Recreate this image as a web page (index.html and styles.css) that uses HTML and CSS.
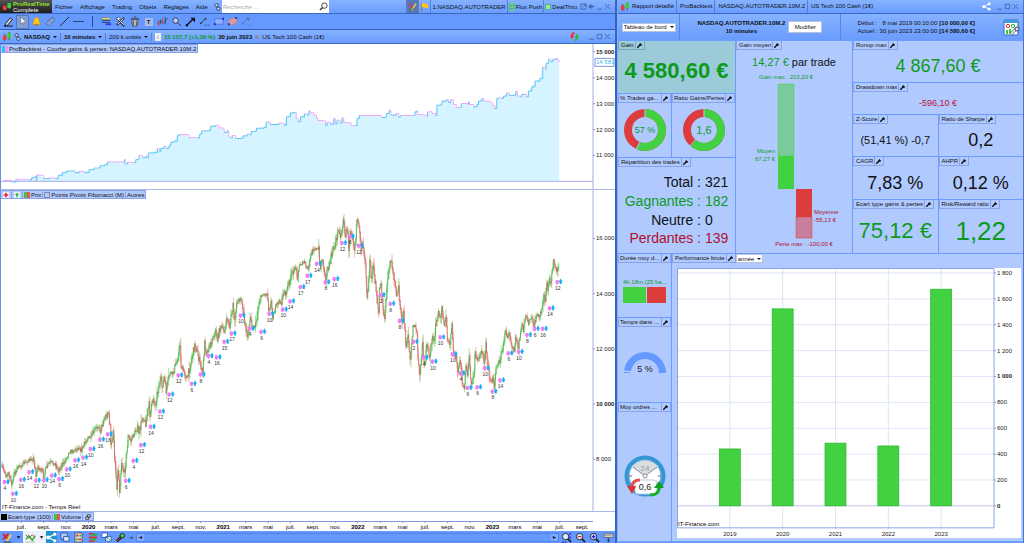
FILE: index.html
```html
<!DOCTYPE html>
<html lang="fr">
<head>
    <meta charset="UTF-8">
    <meta name="viewport" content="width=device-width, initial-scale=1.0">
    <title>ProRealTime - NASDAQ</title>
    <link rel="stylesheet" href="styles.css">
</head>
<body>
    <svg class="defs" aria-hidden="true">
        <symbol id="i-candles" viewBox="0 0 10 10">
            <path d="M3 2v8M8 0v9" stroke="#444" stroke-width="1"/>
            <rect x="1" y="4" width="4" height="5" rx="1" fill="#ee3b3b"/>
            <rect x="6" y="1" width="4" height="6" rx="1" fill="#35d035"/>
        </symbol>
        <symbol id="i-link" viewBox="0 0 8 10">
            <g fill="none" stroke="#3f4b66" stroke-width="1"><rect x="1" y="1" width="4" height="4" rx="2"/><rect x="3" y="5" width="4" height="4" rx="2"/><path d="M3 3l2 4"/></g>
            <path d="M2 3h2M4 7h2" stroke="#fff"/>
        </symbol>
        <symbol id="i-wrench" viewBox="0 0 8 8">
            <path d="M1 7l3-3" stroke="#111" stroke-width="2" stroke-linecap="round"/>
            <path d="M3 2.500L5 1v2l2 0l-1 2l-3 0z" fill="#111"/>
        </symbol>
        <symbol id="i-min" viewBox="0 0 8 8"><path d="M1 7h6" stroke="#4068a8" fill="none"/></symbol>
        <symbol id="i-max" viewBox="0 0 8 8"><path d="M1.500 1.500h5v5h-5z" stroke="#4068a8" fill="none"/></symbol>
        <symbol id="i-close" viewBox="0 0 8 8"><path d="M1 1l6 6M7 1l-6 6" stroke="#4068a8" fill="none"/></symbol>
        <symbol id="i-share" viewBox="0 0 10 10">
            <path d="M8 2L2 5l6 3" stroke="#fff" fill="none"/>
            <g fill="#fff"><circle cx="8" cy="2" r="1.500"/><circle cx="2" cy="5" r="1.800"/><circle cx="8" cy="8" r="1.500"/></g>
        </symbol>
        <symbol id="i-zoom" viewBox="0 0 12 12">
            <path d="M7 7l4 4" stroke="#222" stroke-width="2"/><circle cx="5" cy="5" r="3.500" fill="#dfe9ff" stroke="#222"/>
        </symbol>
    </svg>

    <div class="app">
        <main class="workspace">
            <header class="titlebar">
                <div class="logo">
                    <svg><use href="#i-candles"/></svg>
                    <div><b>ProRealTime</b><span>Complete</span></div>
                </div>
                <nav class="menu">
                    <a href="#">Fichier</a>
                    <a href="#">Affichage</a>
                    <a href="#">Trading</a>
                    <a href="#">Objets</a>
                    <a href="#">Réglages</a>
                    <a href="#">Aide</a>
                </nav>
                <svg class="link"><use href="#i-link"/></svg>
                <div class="search">
                    <input type="text" placeholder="Recherche ..." aria-label="Recherche">
                    <svg viewBox="0 0 10 10"><circle cx="6" cy="4" r="3" fill="#fff" stroke="#333"/><path d="M4 6L1 9" stroke="#333" stroke-width="1.500"/></svg>
                </div>
                <div class="tabs">
                    <button class="sq on" aria-label="Crayons"><svg viewBox="0 0 10 10"><path d="M1 1l5 7" stroke="#e33" stroke-width="1.500"/><path d="M9 1L4 9" stroke="#fc3" stroke-width="1.500"/><path d="M1 6l3 3 3-3" stroke="#2a8a3a" fill="none"/></svg></button>
                    <button class="sq" aria-label="Drapeau"><svg viewBox="0 0 10 10"><path d="M2 1v9" stroke="#a60"/><path d="M2 1q3-1 4 1h3v4H6Q4 4 2 6z" fill="#ffc61a"/></svg></button>
                    <button>1.NASDAQ.AUTOTRADER</button>
                    <button><svg viewBox="0 0 6 8"><path d="M0 0h6v2H0zM0 3h6v2H0zM0 6h6v2H0z" fill="#7fe07f" stroke="#396" stroke-width=".5"/></svg>Flux Push</button>
                    <button><i class="dot"></i>DealThru</button>
                </div>
                <div class="win">
                    <svg viewBox="0 0 8 8"><path d="M1 1h6v6H1zM3 5l3-3M4 2h2v2" stroke="#4068a8" fill="none"/></svg>
                    <svg viewBox="0 0 8 8"><path d="M1 4h6" stroke="#4068a8" stroke-width="2"/><path d="M4 1v6L0 4z" fill="#4068a8"/></svg>
                    <svg><use href="#i-min"/></svg>
                    <svg><use href="#i-close"/></svg>
                </div>
            </header>

            <div class="toolbar">
                <button aria-label="Crayon"><svg viewBox="0 0 12 12"><path d="M3 8l5-6 2 2-5 6-3 1z" fill="#ddd" stroke="#111"/><path d="M1 11h10" stroke="#111"/></svg></button>
                <button class="on" aria-label="Curseur"><svg viewBox="0 0 12 12"><path d="M4 1v8l2-2 2 4 1-1-2-3h3z" fill="#fff" stroke="#666" stroke-width=".7"/></svg></button>
                <button aria-label="Alerte"><svg viewBox="0 0 12 12"><path d="M1 9q2-1 2-4t3-4q3 1 3 4t2 4z" fill="#ffc526" stroke="#b8860b" stroke-width=".6"/><circle cx="6" cy="10" r="1.200" fill="#c60"/></svg></button>
                <button aria-label="Règle"><svg viewBox="0 0 12 12"><path d="M1 8l7-7 3 3-7 7z" fill="#8aa6dd" stroke="#4d6596"/><path d="M4 6l1 1M6 4l1 1M8 2l1 1" stroke="#4d6596"/></svg></button>
                <button aria-label="Droite"><svg viewBox="0 0 12 12"><path d="M1 11L11 1" stroke="#222"/></svg></button>
                <button aria-label="Horizontale"><svg viewBox="0 0 12 12"><path d="M0 6h12" stroke="#29406f"/></svg></button>
                <button aria-label="Verticale"><svg viewBox="0 0 12 12"><path d="M6 0v12" stroke="#29406f"/></svg></button>
                <button aria-label="Calques"><svg viewBox="0 0 12 12"><path d="M1 2h9v2H1z" fill="#f4e36a" stroke="#666" stroke-width=".5"/><path d="M1 5h9M1 7h9" stroke="#29406f"/><path d="M5 9h6" stroke="#33d" stroke-width="2"/></svg></button>
                <button aria-label="Outils"><svg viewBox="0 0 12 12"><path d="M2 2l8 9M10 2l-8 8" stroke="#222" stroke-width="2"/><path d="M3 3l7 7M9 3l-6 6" stroke="#eee"/><path d="M1 3l3-2 2 2-2 2z" fill="#eee" stroke="#222" stroke-width=".6"/></svg></button>
                <button aria-label="Corbeille"><svg viewBox="0 0 12 12"><path d="M3 4h7l-1 7H4z" fill="#ccc" stroke="#333" stroke-width=".8"/><path d="M2 3h9M5 1h3M5 5v5M8 5v5" stroke="#333" stroke-width=".8"/></svg></button>
                <button aria-label="Texte"><b class="txt">T</b></button>
                <button aria-label="Indicateur"><svg viewBox="0 0 12 12"><path d="M0 9l4-4 3 3 5-6" stroke="#274" fill="none"/><path d="M2 5v6M6 2v7" stroke="#e33"/><path d="M4 4v5M9 1v8" stroke="#243f77"/></svg></button>
                <button aria-label="Loupe"><svg viewBox="0 0 12 12"><circle cx="5" cy="5" r="3" fill="#bcd0ff" stroke="#333"/><path d="M7 7l4 4" stroke="#333"/></svg></button>
                <button aria-label="Flèche"><svg viewBox="0 0 12 12"><path d="M2 10l7-7" stroke="#111" stroke-width="1.500"/><path d="M6 2h5v5z" fill="#111"/><circle cx="2" cy="10" r="1.300" fill="#111"/></svg></button>
                <button aria-label="Segment"><svg viewBox="0 0 12 12"><path d="M2 8l5-5" stroke="#333"/><circle cx="2" cy="8" r="1" fill="#333"/><circle cx="7" cy="3" r="1" fill="#333"/><path d="M6 10h5" stroke="#333" stroke-dasharray="1 1"/></svg></button>
                <button aria-label="Rectangle"><svg viewBox="0 0 12 12"><path d="M2 3h9v6H2z" fill="#8fb0ff" stroke="#4262c8" stroke-width=".7"/><path d="M1 9h2M10 3h2" stroke="#22c" stroke-width="2"/></svg></button>
                <button aria-label="Ellipse"><svg viewBox="0 0 12 12"><ellipse cx="6" cy="6" rx="5" ry="3" transform="rotate(-20 6 6)" fill="#c9a0b8" stroke="#d9825a"/><path d="M1 9h2M9 2h2" stroke="#22c" stroke-width="2"/></svg></button>
                <button aria-label="Autres formes"><svg viewBox="0 0 12 12"><path d="M2 8l6-6" stroke="#5874ac"/><circle cx="2" cy="8" r="1" fill="#5874ac"/><path d="M5 2h4v4z" fill="#5874ac"/><path d="M6 10h5" stroke="#5874ac" stroke-dasharray="1 1"/></svg></button>
            </div>

            <div class="instrument">
                <svg class="candles"><use href="#i-candles"/></svg>
                <svg class="link"><use href="#i-link"/></svg>
                <label class="drop"><select class="bold" aria-label="Instrument"><option>NASDAQ</option></select></label>
                <label class="drop"><select class="bold" aria-label="Unité de temps"><option>10 minutes</option></select></label>
                <label class="drop"><select aria-label="Historique"><option>200 k unités</option></select></label>
                <span class="info">i</span>
                <b class="green">15 157,7 (+1,39 %)</b>
                <b>30 juin 2023</b>
                <i class="bullet"></i>
                <span>US Tech 100 Cash (1€)</span>
                <svg class="sync" viewBox="0 0 10 10"><path d="M5 1Q2 1 2 5" stroke="#e33" stroke-width="2" fill="none"/><path d="M0 4h5L2 8z" fill="#e33"/><path d="M5 9q3 0 3-4" stroke="#2b3" stroke-width="2" fill="none"/><path d="M5 6h5L8 2z" fill="#2b3"/></svg>
                <div class="win">
                    <svg><use href="#i-min"/></svg>
                    <svg><use href="#i-max"/></svg>
                    <svg><use href="#i-close"/></svg>
                </div>
            </div>

            <section class="chart equity">
                <div class="legend"><span><i class="sw equity-sw"></i>ProBacktest - Courbe gains &amp; pertes: NASDAQ.AUTOTRADER.10M.2</span></div>
                <svg id="equity"></svg>
            </section>
            <section class="chart price">
                <div class="legend">
                    <span><svg viewBox="0 0 8 8"><path d="M0 0h8v8H0z" fill="#eef"/><path d="M1 4h6M4 1v6" stroke="#e22" stroke-width="2"/></svg></span>
                    <span><svg viewBox="0 0 8 8"><path d="M0 0h8v8H0z" fill="#eef"/><path d="M4 1l3 3H5v3H3V4H1z" fill="#2b3"/></svg></span>
                    <span><i class="sw price-sw"></i>Prix</span>
                    <span><i class="sw empty-sw"></i>Points Pivots Fibonacci (M)</span>
                    <span>Autres</span>
                </div>
                <svg id="price"></svg>
                <div class="source">IT-Finance.com - Temps Réel</div>
            </section>
            <section class="volume">
                <span><i class="sw black-sw"></i>Ecart-type (100)</span>
                <span><i class="sw price-sw"></i>Volume</span>
                <span><svg viewBox="0 0 8 8"><path d="M3 1h4v3H3zM1 4h4v3H1z" fill="#fff" stroke="#111"/></svg></span>
            </section>
            <svg id="time"></svg>

            <footer class="bottombar">
                <button aria-label="Trading"><svg viewBox="0 0 12 12"><path d="M1 2l6 6M7 2L1 8" stroke="#d22" stroke-width="2"/><path d="M5 10l5-7" stroke="#fc3" stroke-width="2"/><path d="M2 11h8" stroke="#333"/></svg></button>
                <button class="arrow">▾</button>
                <button class="white" aria-label="Style"><svg viewBox="0 0 12 12"><path d="M1 3l3 4 4-4 3 3" stroke="#d33" fill="none"/><path d="M1 8l3-4 4 5 3-5" stroke="#2a3" stroke-width="1.500" fill="none"/><path d="M1 11h10" stroke="#9c9"/></svg></button>
                <button class="arrow white">▾</button>
                <button class="teal" aria-label="Partager"><svg><use href="#i-share"/></svg></button>
                <button aria-label="Messages"><svg viewBox="0 0 12 12"><path d="M2 1h7v6H5L3 9V7H2z" fill="#b4ccff" stroke="#35589c"/><path d="M5 5h6v5H5z" fill="#dce7ff" stroke="#35589c"/></svg></button>
                <button aria-label="Notes"><svg viewBox="0 0 12 12"><path d="M2 1h8v10H2z" fill="#ddd" stroke="#555"/><path d="M3 4h3M6 8h3" stroke="#d33" stroke-width="2"/><path d="M7 4h2M3 8h2" stroke="#2a3" stroke-width="2"/></svg></button>
                <button aria-label="Carnet"><svg viewBox="0 0 12 12"><path d="M2 2h6M2 6h9M2 10h6" stroke="#d33" stroke-width="2"/><path d="M5 3h6M4 8h6" stroke="#2b3" stroke-width="2"/></svg></button>
                <button aria-label="Fenêtres"><svg viewBox="0 0 12 12"><path d="M1 1h6v5H1zM5 5h6v5H5z" fill="#fff" stroke="#2e5cb0"/><path d="M6 8l2-1 2 2" stroke="#2a3" fill="none"/></svg></button>
                <button aria-label="Réglages"><svg viewBox="0 0 12 12"><path d="M2 10l6-6" stroke="#222" stroke-width="3"/><path d="M2 10l5-5" stroke="#e44"/><circle cx="8" cy="4" r="2.500" fill="#4c5" stroke="#222"/></svg></button>
                <button class="arrow">«</button>
                <div class="scroll"><button aria-label="Gauche">◂</button><button aria-label="Droite">▸</button></div>
                <button aria-label="Zoom"><svg viewBox="0 0 12 12"><use href="#i-zoom"/><path d="M10 1v3M10 5v2M1 11h5" stroke="#22d" stroke-width="1.500" stroke-dasharray="2 1"/></svg></button>
                <button aria-label="Zoom arrière"><svg viewBox="0 0 12 12"><use href="#i-zoom"/><path d="M3 5h4" stroke="#c33" stroke-width="1.500"/></svg></button>
                <button aria-label="Zoom avant"><svg viewBox="0 0 12 12"><use href="#i-zoom"/><path d="M3 5h4M5 3v4" stroke="#22d" stroke-width="1.500"/></svg></button>
                <button aria-label="Clavier"><svg viewBox="0 0 12 12"><path d="M1 2h10v4H1z" fill="#ddd" stroke="#666"/><path d="M2 4h8" stroke="#555" stroke-dasharray="1 1"/><path d="M6 7v4" stroke="#246" stroke-width="2"/></svg></button>
            </footer>
        </main>

        <aside class="report">
            <header class="titlebar">
                <svg class="candles"><use href="#i-candles"/></svg>
                <div class="crumbs">
                    <span>Rapport détaillé</span>
                    <span>ProBacktest</span>
                    <span>NASDAQ.AUTOTRADER.10M.2</span>
                    <span>US Tech 100 Cash (1€)</span>
                </div>
                <svg class="candles push"><use href="#i-share"/></svg>
                <div class="win">
                    <svg><use href="#i-min"/></svg>
                    <svg><use href="#i-max"/></svg>
                    <svg><use href="#i-close"/></svg>
                </div>
            </header>
            <div class="summary">
                <div class="view"><label class="drop box"><select aria-label="Vue"><option>Tableau de bord</option></select></label></div>
                <div class="system">
                    <b>NASDAQ.AUTOTRADER.10M.2<br>10 minutes</b>
                    <button>Modifier</button>
                </div>
                <div class="dates">
                    <dl>
                        <dt>Début :</dt><dd>8 mai 2019 00:10:00</dd><dd><b>[10 000,00 €]</b></dd>
                        <dt>Actuel :</dt><dd>30 juin 2023 23:00:00</dd><dd><b>[14 580,60 €]</b></dd>
                    </dl>
                    <svg viewBox="0 0 17 17"><rect x="1" y="1" width="14" height="15" rx="1" fill="#fff" stroke="#2c6bb5"/><path d="M1 1h14v3H1z" fill="#3f9adf"/><circle cx="5" cy="7" r="1.700" fill="none" stroke="#e33"/><circle cx="10" cy="7" r="1.700" fill="none" stroke="#2b3"/><path d="M3 11h2v4H3zM6 10h2v5H6z" fill="#3c3"/><path d="M8 15l5-5" stroke="#445" stroke-width="3"/><path d="M8 15l5-5" stroke="#dde4f0" stroke-width="2"/><circle cx="14" cy="10" r="2" fill="#dde4f0" stroke="#445"/></svg>
                </div>
            </div>

            <div class="top">
                <div class="col">
                    <div class="tile gain"><h2>Gain<svg><use href="#i-wrench"/></svg></h2><p class="f22 green bold">4 580,60 €</p></div>
                    <div class="pair donuts">
                        <div class="tile short"><h2>% Trades ga...<svg><use href="#i-wrench"/></svg></h2>
                            <svg class="donut" viewBox="0 0 44 44"><circle cx="22" cy="22" r="17" pathLength="100" stroke="#dd3c3c"/><circle cx="22" cy="22" r="17" pathLength="100" stroke="#41d141" stroke-dasharray="57 43"/><path d="M22 0v9M13 42l4-8" stroke="#b0caff"/><text x="22" y="25" font-size="9">57 %</text></svg>
                        </div>
                        <div class="tile short"><h2>Ratio Gains/Pertes<svg><use href="#i-wrench"/></svg></h2>
                            <svg class="donut" viewBox="0 0 44 44"><circle cx="22" cy="22" r="17" pathLength="100" stroke="#dd3c3c"/><circle cx="22" cy="22" r="17" pathLength="100" stroke="#41d141" stroke-dasharray="61 39"/><path d="M22 0v9M8 38l6-7" stroke="#b0caff"/><text x="22" y="26" font-size="11">1,6</text></svg>
                        </div>
                    </div>
                    <div class="tile trades"><h2>Répartition des trades<svg><use href="#i-wrench"/></svg></h2>
                        <table>
                            <tr><th>Total :</th><td>321</td></tr>
                            <tr class="win-row"><th>Gagnantes :</th><td>182</td></tr>
                            <tr><th>Neutre :</th><td>0</td></tr>
                            <tr class="loss-row"><th>Perdantes :</th><td>139</td></tr>
                        </table>
                    </div>
                </div>
                <div class="tile mean"><h2>Gain moyen<svg><use href="#i-wrench"/></svg></h2>
                    <p class="f11"><span class="green">14,27 €</span> par trade</p>
                    <svg viewBox="0 0 116 178">
                        <g class="up"><text x="50" y="4" text-anchor="middle">Gain max : 213,20 €</text><text x="39" y="78" text-anchor="end">Moyen</text><text x="39" y="86" text-anchor="end">67,27 €</text></g>
                        <rect x="42" y="9" width="16" height="72" fill="#7acb9c" stroke="#41d141" stroke-width=".5"/>
                        <rect x="42" y="81" width="16" height="33" fill="#41d141"/>
                        <rect x="60" y="114" width="16" height="28" fill="#dd3c3c"/>
                        <rect x="60" y="142" width="16" height="21" fill="#c87f9e" stroke="#dd3c3c" stroke-width=".5"/>
                        <g class="down"><text x="78" y="139">Moyenne</text><text x="78" y="147">-55,13 €</text><text x="68" y="171" text-anchor="middle">Perte max : -100,00 €</text></g>
                    </svg>
                </div>
                <div class="col stats">
                    <div class="tile r41"><h2>Runup max<svg><use href="#i-wrench"/></svg></h2><p class="f18 green">4 867,60 €</p></div>
                    <div class="tile r31"><h2>Drawdown max<svg><use href="#i-wrench"/></svg></h2><p class="f9 red">-596,10 €</p></div>
                    <div class="pair r41">
                        <div class="tile"><h2>Z-Score<svg><use href="#i-wrench"/></svg></h2><p class="f11">(51,41 %) -0,7</p></div>
                        <div class="tile"><h2>Ratio de Sharpe<svg><use href="#i-wrench"/></svg></h2><p class="f18">0,2</p></div>
                    </div>
                    <div class="pair r41">
                        <div class="tile"><h2>CAGR<svg><use href="#i-wrench"/></svg></h2><p class="f18">7,83 %</p></div>
                        <div class="tile"><h2>AHPR<svg><use href="#i-wrench"/></svg></h2><p class="f18">0,12 %</p></div>
                    </div>
                    <div class="pair r53">
                        <div class="tile"><h2>Ecart type gains &amp; pertes<svg><use href="#i-wrench"/></svg></h2><p class="f22 green">75,12 €</p></div>
                        <div class="tile"><h2>Risk/Reward ratio<svg><use href="#i-wrench"/></svg></h2><p class="f26 green">1,22</p></div>
                    </div>
                </div>
            </div>

            <div class="bottom">
                <div class="col side">
                    <div class="tile short duration"><h2>Durée moy d...<svg><use href="#i-wrench"/></svg></h2>
                        <div class="bars"><small>4h 18m (25 ba...</small><i></i><i></i></div>
                    </div>
                    <div class="tile short market"><h2>Temps dans ...<svg><use href="#i-wrench"/></svg></h2>
                        <svg class="gauge" viewBox="0 0 44 26"><path d="M4.500 22a17.500 17.500 0 0 1 35 0" fill="none" stroke="#6699ff" stroke-width="7"/><path d="M1 20l8 1" stroke="#cfe0ff"/><text x="22" y="21" font-size="9">5 %</text></svg>
                    </div>
                    <div class="tile short orders"><h2>Moy ordres ...<svg><use href="#i-wrench"/></svg></h2>
                        <svg class="clock" viewBox="0 0 44 44">
                            <circle cx="22" cy="22" r="18" fill="#fff" stroke="#3795d3" stroke-width="5"/>
                            <circle cx="22" cy="22" r="16" fill="none" stroke="#8fc5e8"/>
                            <path d="M22 21L8 13Q22 0 36 13z" fill="#d8dde2"/>
                            <path d="M10 13l12 9 12-9" fill="none" stroke="#889"/>
                            <path d="M6 22h3M35 22h3" stroke="#667"/><circle cx="22" cy="22" r="2" fill="#fff" stroke="#889"/>
                            <text x="22" y="17" font-size="8" class="grey">24</text>
                            <rect x="12" y="26" width="22" height="14" rx="3" fill="#fff" stroke="#bcd"/>
                            <path d="M17 26Q9 26 9 33" fill="none" stroke="#e85050" stroke-width="3"/><path d="M4 32h9l-4 8z" fill="#e03030"/>
                            <path d="M27 41q9 0 9-7" fill="none" stroke="#18b028" stroke-width="3"/><path d="M31 34h10l-5-7z" fill="#10a020"/>
                            <text x="22" y="36" font-size="9">0,6</text>
                        </svg>
                    </div>
                </div>
                <div class="tile perf">
                    <h2>Performance brute<svg><use href="#i-wrench"/></svg></h2>
                    <label class="drop box year"><select aria-label="Période"><option>année</option></select></label>
                    <svg id="perf"></svg>
                </div>
            </div>
        </aside>
    </div>
    <script src="charts.js"></script>
</body>
</html>
```
FILE: styles.css
```css
* {
    box-sizing: border-box;
}

html, body {
    height: 100%;
}

body {
    margin: 0;
    font: 6px/8px "Liberation Sans", Arial, sans-serif;
    color: #111;
    background-color: #6699ff;
}

.defs {
    position: absolute;
    width: 0;
    height: 0;
}

a {
    color: inherit;
    text-decoration: none;
}

button, select, input {
    font: inherit;
    color: inherit;
    margin: 0;
    padding: 0;
    border: 0;
    background: none;
}

svg {
    flex: none;
}

.green {
    color: #0d9a1c;
}

.red {
    color: #c01030;
}

.app {
    display: grid;
    grid-template-columns: 617fr 407fr;
    min-height: 100vh;
}

.workspace, .report {
    display: flex;
    flex-direction: column;
    min-width: 0;
}

.workspace {
    border-right: 2px solid #3564c0;
}

.titlebar, .instrument {
    display: flex;
    align-items: center;
    flex: none;
    height: 14px;
    background-image: linear-gradient(#86b2ff, #6a9cff);
    border-bottom: 1px solid #3a68bc;
    white-space: nowrap;
}

.logo {
    display: flex;
    align-items: center;
    gap: 2px;
    width: 52px;
    height: 13px;
    padding-left: 2px;
    color: #fff;
    line-height: 6px;
    background-image: linear-gradient(#555, #1c1c1c);
}

.logo svg, .candles {
    width: 9px;
    height: 9px;
}

.logo b, .logo span {
    display: block;
}

.logo b {
    color: #8fe02a;
}

.menu {
    display: flex;
    gap: 7px;
    padding: 0 6px 0 3px;
}

.link {
    width: 7px;
    height: 10px;
}

.search {
    display: flex;
    align-items: center;
    width: 107px;
    height: 13px;
    margin-left: 1px;
    padding: 0 1px;
    background-color: #fff;
}

.search input {
    flex: 1;
    min-width: 0;
    font-style: italic;
    outline: none;
}

.search input::placeholder {
    color: #aaa;
}

.search svg {
    width: 9px;
    height: 9px;
}

.tabs {
    display: flex;
    height: 13px;
    margin-left: auto;
}

.tabs button {
    display: flex;
    align-items: center;
    gap: 1px;
    padding: 0 1px;
    border-left: 1px solid #5580d0;
}

.tabs svg {
    width: 6px;
    height: 8px;
}

.tabs .sq svg {
    width: 9px;
    height: 10px;
}

.tabs .sq.on {
    background-color: #5577bb;
}

.dot {
    width: 6px;
    height: 6px;
    background-color: #8df08d;
    border: 1px solid #5a9;
}

.win {
    display: flex;
    gap: 1px;
    padding: 0 4px 0 2px;
}

.win svg {
    width: 7px;
    height: 7px;
}

.toolbar {
    display: flex;
    align-items: center;
    gap: 1px;
    flex: none;
    height: 16px;
    padding-left: 2px;
    border-bottom: 1px solid #2f5db0;
}

.toolbar button {
    display: flex;
    align-items: center;
    justify-content: center;
    width: 13px;
    height: 14px;
}

.toolbar svg {
    width: 11px;
    height: 11px;
}

.toolbar .on {
    background-color: #7f9fdc;
    border: 1px solid #5577b8;
}

.toolbar .txt {
    width: 8px;
    color: #223;
    background-color: #a9bde8;
}

.instrument {
    gap: 3px;
    padding-left: 2px;
}

.instrument .drop {
    padding-right: 3px;
    border-right: 1px solid #5580d0;
}

.drop {
    display: flex;
    align-items: center;
    gap: 2px;
}

.drop::after {
    content: "";
    border: 2px solid transparent;
    border-top-color: #111;
    border-bottom: 0;
}

.drop select {
    appearance: none;
    line-height: 8px;
}

.bold {
    font-weight: bold;
}

.drop.box {
    height: 9px;
    padding: 0 1px;
    background-color: #fff;
    border: 1px solid #b8c4dd;
}

.info {
    width: 6px;
    text-align: center;
    color: #777;
    background-color: #eee;
}

.bullet {
    width: 4px;
    height: 4px;
    border-radius: 50%;
    background-color: #8a8a9a;
}

.sync {
    width: 9px;
    height: 9px;
    margin: 0 4px 0 auto;
}

.chart {
    position: relative;
    min-height: 0;
    background-color: #fff;
    border-left: 1px solid #6f8fd6;
    border-bottom: 1px solid #a9b9e6;
}

.chart.equity {
    flex: 146 1 0;
}

.chart.price {
    flex: 322 1 0;
}

.chart > svg {
    display: block;
    position: absolute;
    width: 100%;
    height: 100%;
}

.legend, .source {
    position: absolute;
    z-index: 1;
    left: 0;
}

.legend {
    top: 0;
    display: flex;
}

.legend span, .volume span {
    display: flex;
    align-items: center;
    gap: 1px;
    height: 9px;
    padding: 0 1px;
    background-color: #b0caff;
    border: 1px solid #88a4e6;
    border-left: 0;
    white-space: nowrap;
}

.legend svg, .volume svg {
    width: 8px;
    height: 6px;
}

.source {
    bottom: 0;
    padding-left: 1px;
}

.sw {
    width: 6px;
    height: 6px;
}

.equity-sw {
    background-image: linear-gradient(90deg, #1ec8ff 50%, #ff8cf0 50%);
}

.price-sw {
    background-image: linear-gradient(90deg, #3fc24a 50%, #e25a5a 50%);
}

.empty-sw {
    border: 1px solid #88a;
}

.black-sw {
    background-color: #000;
}

.volume {
    display: flex;
    flex: none;
    height: 9px;
    background-color: #fff;
}

#time {
    display: block;
    width: 100%;
    height: 10px;
    background-color: #fff;
}

.bottombar {
    display: flex;
    align-items: center;
    flex: none;
    height: 12px;
}

.bottombar > button {
    display: flex;
    align-items: center;
    justify-content: center;
    width: 14px;
    height: 12px;
}

.bottombar > .arrow {
    width: 9px;
}

.bottombar svg {
    width: 11px;
    height: 11px;
}

.bottombar .white {
    background-color: #eef2fb;
}

.bottombar .teal {
    width: 11px;
    background-color: #2490cc;
}

.scroll {
    display: flex;
    justify-content: space-between;
    flex: 1;
    height: 9px;
    border: 1px solid #5283ea;
}

.scroll button {
    width: 7px;
    line-height: 7px;
    background-color: #82aaff;
}

/* report */

.report {
    background-color: #6b9cff;
    border-left: 1px solid #85aeff;
    border-right: 1px solid #4474d8;
}

.report .titlebar {
    padding-left: 2px;
}

.crumbs {
    display: flex;
}

.crumbs span {
    padding: 0 2px 0 3px;
    border-right: 1px solid #5580d0;
    line-height: 13px;
}

.crumbs span:last-child {
    border: 0;
}

.push {
    margin-left: auto;
}

.report .push {
    margin-right: 3px;
}

.summary {
    display: grid;
    grid-template-columns: 62fr 160fr 182fr;
    flex: none;
    height: 26px;
    margin-bottom: 1px;
    background-image: linear-gradient(#86b2ff, #6a9cff);
    white-space: nowrap;
}

.summary > div {
    display: flex;
    align-items: center;
    justify-content: center;
    border-right: 1px solid #5a86dd;
}

.summary > .dates {
    justify-content: flex-end;
    gap: 28px;
    padding-right: 3px;
    border: 0;
}

.system {
    gap: 3px;
    text-align: center;
}

.system button {
    width: 34px;
    height: 12px;
    background-color: #fff;
    border: 1px solid #b8c4dd;
    border-radius: 1px;
}

.dates dl {
    display: grid;
    grid-template-columns: auto auto auto;
    column-gap: 2px;
    margin: 0;
}

.dates dd {
    margin: 0;
    text-align: right;
}

.dates svg {
    width: 17px;
    height: 17px;
}

.top, .bottom {
    display: grid;
    gap: 1px;
    min-height: 0;
}

.top {
    flex: 213 1 0;
    grid-template-columns: 117fr 116fr 170fr;
    margin-bottom: 1px;
}

.bottom {
    flex: 288 1 0;
    grid-template-columns: 53fr 351fr;
    margin-bottom: 2px;
}

.col {
    display: flex;
    flex-direction: column;
    gap: 1px;
    min-width: 0;
    min-height: 0;
}

.pair {
    display: grid;
    grid-template-columns: 1fr 1fr;
    gap: 1px;
}

.tile {
    display: flex;
    flex-direction: column;
    min-width: 0;
    min-height: 0;
    background-color: #b0caff;
}

.gain {
    flex: 52 1 0;
    background-color: #9bcbd8;
}

.donuts {
    flex: 63 1 0;
    grid-template-columns: 53fr 63fr;
}

.trades {
    flex: 96 1 0;
}

.r31 { flex: 31 1 0; }
.r41 { flex: 42 1 0; }
.r53 { flex: 54 1 0; }

h2 {
    display: flex;
    flex: none;
    align-self: flex-start;
    height: 9px;
    margin: 0;
    padding-left: 2px;
    border: 1px solid #88a4e6;
    border-top: 0;
    font-size: 6px;
    font-weight: normal;
    white-space: nowrap;
}

h2 svg {
    width: 9px;
    height: 8px;
    margin-left: 1px;
    padding: 1px;
    border-left: 1px solid #88a4e6;
}

.short h2 {
    align-self: stretch;
    justify-content: space-between;
    padding-left: 1px;
}

.short h2 svg {
    margin-left: 0;
}

.gain h2 {
    border-color: #74a8bb;
}

.tile p {
    display: flex;
    flex: 1;
    align-items: center;
    justify-content: center;
    margin: 0;
    line-height: 1;
    white-space: pre;
}

.f9 { font-size: 9px; }
.f11 { font-size: 11px; }
.f18 { font-size: 18px; }
.f22 { font-size: 22px; }
.f26 { font-size: 26px; }

.donut, .gauge, .clock {
    align-self: center;
    width: 44px;
    margin: auto;
}

.donut {
    height: 44px;
}

.donut circle {
    fill: none;
    stroke-width: 8;
    transform: rotate(-90deg);
    transform-origin: center;
}

.donut text, .gauge text, .clock text {
    text-anchor: middle;
    fill: #222;
}

.donut text {
    fill: #0d9a1c;
}

.clock .grey {
    fill: #999;
}

.trades table {
    flex: 1;
    margin: 7px 0 5px;
    border-spacing: 0;
    font-size: 14px;
    line-height: 17px;
}

.trades th {
    width: 83px;
    padding: 0;
    text-align: right;
    font-weight: normal;
    white-space: nowrap;
}

.trades td {
    padding: 0 0 0 4px;
}

.win-row {
    color: #0d9a1c;
}

.loss-row {
    color: #b01028;
}

.mean > p {
    flex: none;
    height: 25px;
}

.mean > svg {
    width: 100%;
    overflow: visible;
}

.up {
    fill: #0d9a1c;
}

.down {
    fill: #b01028;
}

.duration {
    flex: 63 1 0;
}

.market {
    flex: 84 1 0;
}

.orders {
    flex: 139 1 0;
}

.bars {
    display: grid;
    grid-template-columns: 23px 19px;
    gap: 1px;
    margin: auto;
}

.bars small {
    grid-column: 1 / 3;
    width: 43px;
    white-space: nowrap;
    font-size: 6px;
    color: #0d9a1c;
}

.bars i {
    height: 16px;
    background-color: #41d141;
}

.bars i:last-child {
    background-color: #dd3c3c;
}

.perf {
    display: grid;
    grid-template-columns: auto 1fr;
    grid-template-rows: 9px 1fr;
    row-gap: 5px;
}

.year {
    justify-self: start;
}

#perf {
    grid-column: 1 / 3;
    width: calc(100% - 7px);
    height: calc(100% - 3px);
    margin-left: 5px;
    background-color: #fff;
}
```
FILE: charts.js
```js
const NS = 'http://www.w3.org/2000/svg';
const AXIS = 22;    // width of the scale on the right
const SPAN = 1779;  // time span of the series

// time, level
const equity = [8,408,30,408,33,413,45,405,85,407,92,400,103,395,106,408,108,392,120,393,128,403,145,401,165,403,172,393,185,385,197,380,218,379,222,385,235,381,250,385,265,376,280,371,290,371,298,364,312,361,320,353,368,354,371,345,373,359,380,354,400,355,405,346,413,343,415,334,425,340,435,335,438,340,443,326,460,325,470,313,476,323,480,313,490,306,496,312,505,305,510,294,520,291,530,273,537,271,560,271,565,280,590,281,597,270,603,260,625,259,630,246,645,243,655,251,668,255,671,265,680,259,684,278,690,281,695,274,705,283,722,282,727,275,740,270,748,272,752,262,763,261,768,252,790,250,797,233,805,235,810,241,835,237,850,243,858,218,870,206,883,204,887,223,892,233,900,218,912,209,920,213,925,200,930,206,940,213,948,221,952,229,968,230,975,244,980,235,990,240,1000,223,1005,239,1010,228,1018,236,1025,221,1030,235,1048,236,1052,244,1065,244,1070,223,1077,214,1140,215,1145,220,1155,219,1158,208,1167,198,1172,213,1188,208,1195,219,1200,214,1240,214,1244,203,1250,200,1252,211,1270,213,1280,217,1282,203,1295,208,1305,214,1310,183,1322,181,1325,171,1340,166,1345,175,1352,166,1360,181,1368,190,1380,190,1383,178,1403,181,1405,173,1408,181,1420,188,1430,181,1435,171,1445,163,1450,171,1470,175,1477,185,1483,193,1490,163,1495,161,1505,163,1510,156,1520,146,1527,154,1542,153,1547,142,1552,156,1562,158,1565,151,1573,150,1578,158,1585,141,1595,128,1605,111,1620,103,1628,69,1636,76,1638,58,1646,45,1652,53,1658,46,1668,43,1672,48,1677,55];

const price = [3,835,12,850,15,860,22,855,33,885,40,855,50,835,60,832,70,822,85,815,97,810,103,840,105,860,112,835,125,850,128,862,140,828,150,820,165,828,172,845,185,828,197,805,205,790,220,785,235,775,240,785,255,758,262,745,270,748,280,725,292,710,298,725,308,695,322,670,328,710,330,775,337,735,342,810,348,890,352,840,356,905,362,820,370,855,378,790,382,742,390,755,400,735,410,715,415,735,425,685,435,700,445,645,448,675,458,625,463,650,470,610,480,570,484,595,490,565,496,605,508,550,516,555,525,525,533,500,538,460,541,530,548,545,560,570,572,510,583,465,590,490,600,530,606,550,612,460,617,490,625,475,635,450,645,425,650,450,660,410,670,425,680,390,687,410,697,350,702,400,708,340,720,325,726,350,732,400,740,440,750,385,756,415,765,410,775,340,785,315,800,315,805,360,812,340,817,380,825,355,835,335,843,340,850,305,855,315,865,280,880,240,887,235,890,260,898,225,912,218,918,235,925,235,930,200,940,175,955,180,960,235,965,205,972,245,977,270,980,235,985,240,992,200,1005,160,1015,115,1020,140,1029,95,1035,135,1040,115,1045,175,1050,120,1055,135,1062,175,1070,95,1078,120,1082,180,1087,155,1095,210,1100,320,1103,300,1108,220,1113,270,1118,230,1125,280,1135,370,1137,300,1142,285,1148,360,1153,390,1160,280,1170,215,1175,220,1182,270,1188,315,1195,300,1200,360,1205,400,1210,360,1217,470,1223,440,1230,505,1238,410,1245,410,1250,430,1253,510,1258,550,1267,470,1273,525,1280,470,1288,500,1297,440,1302,460,1307,405,1315,370,1320,390,1325,345,1332,405,1337,390,1342,455,1348,465,1355,415,1360,490,1368,510,1373,550,1380,515,1388,590,1393,595,1397,530,1402,560,1407,510,1414,590,1420,560,1425,490,1432,515,1438,500,1445,480,1452,520,1457,470,1463,530,1470,570,1475,580,1478,560,1482,585,1488,530,1497,520,1505,485,1510,470,1515,415,1522,450,1527,430,1533,470,1542,485,1547,445,1555,475,1562,430,1565,405,1570,420,1578,380,1585,400,1593,385,1602,410,1610,375,1617,380,1625,360,1632,320,1635,340,1640,280,1643,295,1648,265,1653,280,1660,215,1665,230,1672,245,1678,215];

// time, level, number of orders
const orders = [[12,880,4],[37,915,10],[61,873,16],[86,850,14],[106,875,12],[130,874,10],[154,860,14],[176,871,6],[199,841,10],[224,814,16],[248,806,14],[270,780,10],[299,752,16],[322,736,16],[376,876,6],[399,816,4],[422,768,12],[451,713,14],[479,667,12],[507,616,12],[534,558,12],[574,584,6],[601,556,8],[625,500,4],[649,504,16],[672,457,15],[694,432,17],[721,378,10],[749,417,4],[783,427,6],[807,373,10],[848,360,10],[870,335,14],[901,292,17],[922,258,17],[950,222,14],[976,278,6],[1003,268,16],[1026,160,12],[1049,140,8],[1076,168,12],[1142,316,2],[1171,343,8],[1199,394,8],[1241,457,2],[1271,505,4],[1298,517,10],[1321,444,10],[1358,495,10],[1382,552,4],[1403,596,6],[1432,594,6],[1455,537,10],[1478,607,8],[1501,573,14],[1526,492,6],[1557,487,10],[1582,437,8],[1605,418,6],[1629,418,16],[1650,356,14],[1673,277,12]];

const months = ['juil.', 'sept.', 'nov.', '2020', 'mars', 'mai', 'juil.', 'sept.', 'nov.', '2021', 'mars', 'mai', 'juil.', 'sept.', 'nov.', '2022', 'mars', 'mai', 'juil.', 'sept.', 'nov.', '2023', 'mars', 'mai', 'juil.', 'sept.'];

const years = [[2019, 440], [2020, 1523], [2021, 485], [2022, 463], [2023, 1675]];

function start(id) {
    const svg = document.getElementById(id);
    svg.innerHTML = '';
    const box = svg.getBoundingClientRect();
    return { svg, w: box.width, h: box.height };
}

function add(svg, name, attrs, text) {
    const el = document.createElementNS(NS, name);
    for (const key in attrs) el.setAttribute(key, attrs[key]);
    if (text !== undefined) el.textContent = text;
    svg.appendChild(el);
}

function format(n) {
    return String(n).replace(/\B(?=(\d{3})+$)/g, ' ');
}

function scale(svg, x, y, value, bold) {
    add(svg, 'path', { d: `M${x} ${y}h2`, stroke: '#7f98dc' });
    add(svg, 'text', { x: x + 3, y: y + 2, fill: '#222', 'font-weight': bold ? 'bold' : 'normal' }, format(value));
}

function drawEquity() {
    const { svg, w, h } = start('equity');
    const plot = w - AXIS, kx = plot / SPAN, ky = h / 435;
    let area = '', up = '', down = '';
    for (let i = 0; i < equity.length; i += 2) {
        const x = equity[i] * kx, y = equity[i + 1] * ky;
        area += `${i ? 'L' : 'M'}${x} ${y}`;
        if (i) {
            const px = equity[i - 2] * kx, py = equity[i - 1] * ky;
            const seg = `M${px} ${py}H${x}V${y}`;
            if (y < py) up += seg; else down += seg;
        }
    }
    const base = 411 * ky;
    add(svg, 'path', { d: `${area}V${base}H2z`, fill: '#d5f4ff' });
    add(svg, 'path', { d: down, fill: 'none', stroke: '#f2a8f4' });
    add(svg, 'path', { d: up, fill: 'none', stroke: '#62c6f5' });
    add(svg, 'path', { d: `M0 ${base}H${plot}`, stroke: '#a9aaee', 'stroke-width': 1 });
    add(svg, 'path', { d: `M${plot} 0V${h}`, stroke: '#9db1e6' });
    for (let v = 11000; v <= 15000; v += 1000) {
        scale(svg, plot, (411 - (v - 10000) * 0.0775) * ky, v, v === 15000);
    }
    const y = 55 * ky;
    add(svg, 'rect', { x: plot + 2, y: y - 4, width: 19, height: 8, fill: '#fff', stroke: '#7f98dc' });
    add(svg, 'text', { x: plot + 3, y: y + 2, fill: '#35b8e8' }, '14 581');
}

function drawPrice() {
    const { svg, w, h } = start('price');
    const plot = w - AXIS, kx = plot / SPAN, ky = h / 966;
    let seed = 7;
    const random = () => (seed = (seed * 16807) % 2147483647) / 2147483647;
    const wick = ['', ''], body = ['', ''];
    let last = price[1];
    for (let i = 2; i < price.length; i += 2) {
        const [x0, y0, x1, y1] = price.slice(i - 2, i + 2);
        const swing = 7 + Math.min(18, Math.abs(y1 - y0) / 3);
        for (let x = x0; x < x1; x += 2) {
            const y = y0 + (y1 - y0) * (x - x0) / (x1 - x0) + (random() - 0.5) * swing;
            const side = y <= last ? 0 : 1;
            const top = Math.min(y, last), end = Math.max(y, last);
            wick[side] += `M${x * kx} ${(top - random() * swing) * ky}V${(end + random() * swing) * ky}`;
            body[side] += `M${x * kx} ${(top - 1) * ky}V${(end + 1) * ky}`;
            last = y;
        }
    }
    ['#5ed35e', '#ee8a8a'].forEach((c, i) => add(svg, 'path', { d: wick[i], stroke: c, 'stroke-width': 0.6 }));
    ['#3f9c3a', '#c0504a'].forEach((c, i) => add(svg, 'path', { d: body[i], stroke: c, 'stroke-width': 0.6 }));

    for (const [t, level, count] of orders) {
        const x = t * kx, y = level * ky;
        add(svg, 'path', { d: `M${x - 2} ${y - 2}h3v2h1l-2.5 3-2.5-3h1z`, fill: '#f27cf2' });
        add(svg, 'path', { d: `M${x + 2} ${y + 2}h2v-2h1l-2-3.5-2 3.500h1z`, fill: '#10b4f6' });
        add(svg, 'text', { x: x, y: y + 8, 'font-size': 5, 'text-anchor': 'middle', fill: '#333' }, count);
    }

    add(svg, 'path', { d: `M${plot} 0V${h}`, stroke: '#9db1e6' });
    for (let v = 8000; v <= 16000; v += 2000) {
        scale(svg, plot, (146 + (16000 - v) * 0.0831) * ky, v, v === 10000);
    }
}

function drawTime() {
    const { svg, w } = start('time');
    const plot = w - AXIS;
    add(svg, 'path', { d: `M0 0.5H${plot}`, stroke: '#7f98dc' });
    months.forEach((name, i) => {
        const x = plot * (64 + i * 67.3) / SPAN;
        add(svg, 'path', { d: `M${x} 0v2`, stroke: '#7f98dc' });
        add(svg, 'text', { x: x, y: 8, 'text-anchor': 'middle', 'font-weight': name.startsWith('20') ? 'bold' : 'normal' }, name);
    });
}

function drawPerf() {
    const { svg, w, h } = start('perf');
    const plot = w - 27, foot = h - 10, step = plot / 6;
    const zero = foot * 238 / 260, unit = foot * 233 / 260 / 1800;
    for (let v = 0; v <= 1800; v += 200) {
        const y = zero - v * unit;
        add(svg, 'path', { d: `M0 ${y}H${plot}`, stroke: v ? '#dde5f6' : '#c4c4f2' });
        scale(svg, plot, y, v, v === 1000 || v === 0);
    }
    years.forEach(([year, gain], i) => {
        const x = step * (i + 1);
        add(svg, 'path', { d: `M${x} 0V${foot + 2}`, stroke: '#dde5f6' });
        add(svg, 'rect', { x: x - 10.5, y: zero - gain * unit, width: 21, height: gain * unit, fill: '#41d141', stroke: '#2eb52e', 'stroke-width': 0.7 });
        add(svg, 'text', { x: x, y: foot + 8, 'text-anchor': 'middle', fill: '#222' }, year);
    });
    add(svg, 'path', { d: `M0 0.5H${plot}V${foot}H0.5V0`, fill: 'none', stroke: '#88a4e6' });
    add(svg, 'text', { x: 1, y: foot - 2 }, 'IT-Finance.com');
}

function draw() {
    drawEquity();
    drawPrice();
    drawTime();
    drawPerf();
}

draw();
window.addEventListener('resize', draw);
```
